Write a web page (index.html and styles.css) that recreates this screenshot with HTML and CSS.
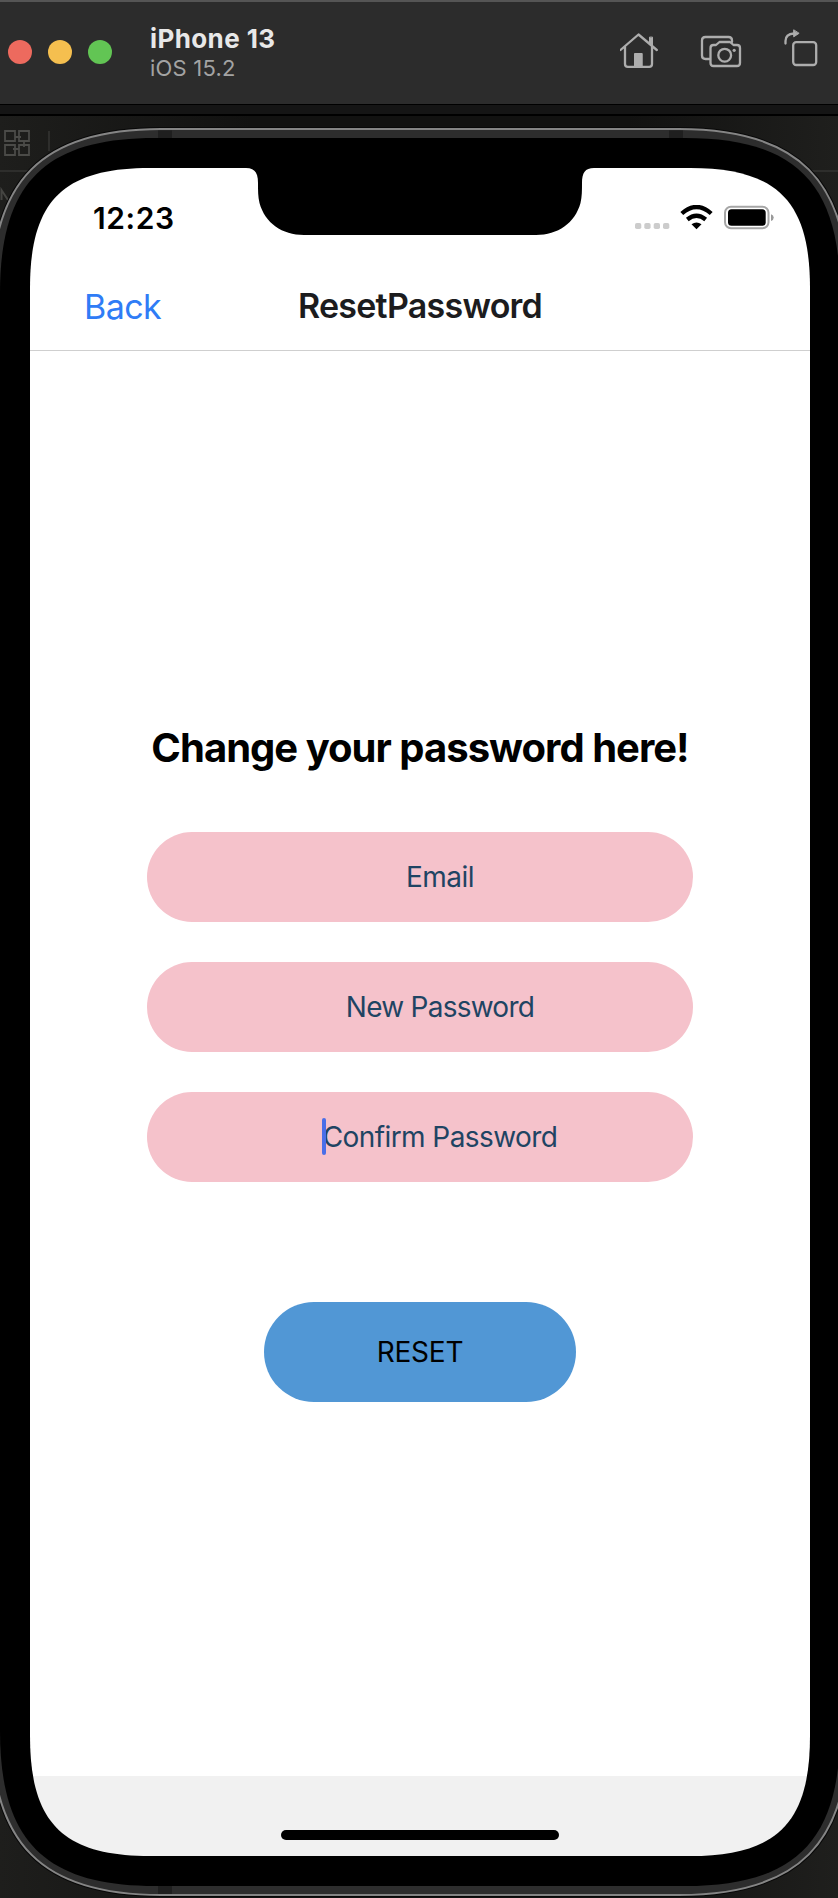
FILE: index.html
```html
<!DOCTYPE html>
<html lang="en">
<head>
<meta charset="utf-8">
<title>iPhone 13</title>
<link rel="stylesheet" href="styles.css">
</head>
<body>
<header class="titlebar">
  <div class="lights"><i class="light red"></i><i class="light yellow"></i><i class="light green"></i></div>
  <div class="device-name"><strong class="model">iPhone 13</strong><span class="os">iOS 15.2</span></div>
  <svg class="tools" width="218" height="60" viewBox="0 0 218 60" fill="none" stroke="#adadad" stroke-width="2.3" stroke-linecap="round" stroke-linejoin="round">
    <path d="M.5 30 18.500 14.500 36.800 30M5 27V44Q5 46.800 7.800 46.800H29.200Q32 46.800 32 44V27"/>
    <path d="M29.500 17.500V24L32.500 27V17.500Z" fill="#adadad" stroke-width="1"/>
    <path d="M14.500 46.500V33.500H22.200V46.500Z" fill="#adadad" stroke-width="1"/>
    <path d="M89.500 39H85.500Q82 39 82 35.500V20.500Q82 17 85.500 17H108.500Q112 17 112 20.500V22"/>
    <path d="M93.500 25H96L99.500 22H110L113.500 25H117Q120 25 120 28V43Q120 46 117 46H93.500Q90.500 46 90.500 43V28Q90.500 25 93.500 25Z"/>
    <circle cx="104.700" cy="35.200" r="6.400"/>
    <circle cx="114.200" cy="30.300" r="1.600" fill="#adadad" stroke="none"/>
    <rect x="173.200" y="22.200" width="23" height="22.800" rx="3"/>
    <path d="M165.500 23.500V21Q165.500 14 174 13.500"/>
    <path d="M173.700 10.200V16.800L178.800 13.500Z" fill="#adadad" stroke-width="1"/>
  </svg>
</header>
<main class="stage">
  <section class="screen">
    <div class="status">
      <span class="time">12:23</span>
      <svg class="indicators" width="140" height="26" viewBox="0 0 140 26">
        <g fill="#ccc"><rect x="0" y="18" width="6.300" height="6" rx="1.800"/><rect x="9.300" y="18" width="6.300" height="6" rx="1.800"/><rect x="18.700" y="18" width="6.300" height="6" rx="1.800"/><rect x="28" y="18" width="6.300" height="6" rx="1.800"/></g>
        <g fill="none" stroke="#000" stroke-width="4.300"><path d="M46.800 8.500Q61.500-4.500 76.200 8.500"/><path d="M52.300 14.500Q61.500 7 70.700 14.500"/></g>
        <path d="M56.500 19.300Q61.500 15.500 66.500 19.300L61.500 24.300Z"/>
        <rect x="90" y="1.700" width="43.500" height="21.600" rx="6" fill="none" stroke="#a6a6a6" stroke-width="2"/>
        <rect x="93" y="4.300" width="37.700" height="16.500" rx="3.500"/>
        <path d="M136 9.200Q138.700 10 138.700 12.600 138.700 15.300 136 16Z" fill="#999"/>
      </svg>
    </div>
    <nav class="nav"><a class="back">Back</a><h1 class="nav-title">ResetPassword</h1></nav>
    <div class="content">
      <h2 class="heading">Change your password here!</h2>
      <form class="fields">
        <div class="field"><span class="email">Email</span></div>
        <div class="field"><span class="new">New Password</span></div>
        <div class="field"><span class="confirm"><i class="caret"></i>Confirm Password</span></div>
      </form>
      <div class="reset"><span>RESET</span></div>
    </div>
    <footer class="bottom"><div class="home-indicator"></div></footer>
  </section>
</main>
<svg class="bezel" width="838" height="1782" viewBox="0 116 838 1782">
  <defs>
    <linearGradient id="backdrop" x1="0" y1="0" x2="1" y2="0"><stop offset="0" stop-color="#1e1e1c"/><stop offset=".3" stop-color="#121211"/><stop offset=".75" stop-color="#121211"/><stop offset="1" stop-color="#1f1f1d"/></linearGradient>
    <mask id="cutout"><rect y="116" width="838" height="1782" fill="#fff"/>
      <path fill="#000" d="M150 168H690c87 0 120 33 120 120V1736c0 87-33 120-120 120H150c-87 0-120-33-120-120V288c0-87 33-120 120-120Z"/>
      <path fill="#fff" d="M246 167V168C255 168 258 173 258 183C258 190 258 197 259.500 203C265 223 282 235 304 235H536C558 235 575 223 580.500 203C582 197 582 190 582 183C582 173 585 168 594 168V167Z"/>
    </mask>
    <path id="body" d="M161 129H679c119 0 170 51 170 170V1725c0 119-51 170-170 170H161c-119 0-170-51-170-170V299c0-119 51-170 170-170Z"/>
  </defs>
  <g mask="url(#cutout)">
    <rect y="116" width="838" height="1782" fill="url(#backdrop)"/>
    <g fill="none" stroke="#4b4b48" stroke-width="1.800"><path d="M5 131H15V141H5ZM19 131H29V141H19ZM5 145H15V155H5ZM19 145H29V155H19ZM15 137H21M24 141V147M13 149H19"/></g>
    <path d="M49 131V151M0 171H70M780 171H838" stroke="#2e2e2c" stroke-width="2"/>
    <path d="M1.500 200V190L8 200" fill="none" stroke="#454542" stroke-width="2"/>
    <use href="#body" stroke="#080808" stroke-width="4"/>
    <use href="#body" fill="#2d2d2d" stroke="#858585" stroke-width="2"/>
    <path fill="#1f1f1f" d="M158 130.500H172V140H158ZM669 130.500H683V140H669ZM158 1884H172V1894H158Z"/>
    <path d="M155 138H685c110 0 155 45 155 155V1731c0 110-45 155-155 155H155c-110 0-155-45-155-155V293c0-110 45-155 155-155Z"/>
  </g>
</svg>
</body>
</html>
```
FILE: styles.css
```css
* { box-sizing: border-box; }
body { margin: 0; position: relative; height: 1898px; overflow: hidden; background: #000; font-family: Inter, "Liberation Sans", sans-serif; }
.titlebar { height: 116px; display: flex; align-items: flex-start; border-top: 2px solid #555; background: linear-gradient(#2c2c2c 102px, #000 102px 103px, #151515 103px 112px, #000 112px); }
.lights { display: flex; gap: 16px; padding: 38px 0 0 8px; }
.light { width: 24px; height: 24px; border-radius: 50%; }
.red { background: #ed6a5e; }
.yellow { background: #f5bf4f; }
.green { background: #62c554; }
.device-name { display: flex; flex-direction: column; width: 200px; padding: 21px 0 0; margin-left: 38px; white-space: nowrap; }
.model { font-size: 26px; line-height: 31px; font-weight: 700; color: #e8e8e8; letter-spacing: .4px; }
.os { font-size: 22px; line-height: 28px; color: #a3a3a3; letter-spacing: .2px; }
.tools { margin: 18px 0 0 270px; flex: none; }
.stage { padding: 52px 28px 42px 30px; height: 1782px; }
.screen { width: 780px; height: 1688px; background: #fff; display: flex; flex-direction: column; }
.status { height: 90px; display: flex; justify-content: space-between; padding: 32px 35px 0 63px; }
.time { font-size: 30px; line-height: 36px; font-weight: 600; color: #000; letter-spacing: .6px; }
.indicators { margin-top: 5px; }
.nav { height: 93px; display: grid; grid-template-columns: 1fr auto 1fr; align-items: center; border-bottom: 1px solid #cfcfcf; padding: 3px 54px 0; }
.back { font-size: 34px; color: #2f7cf6; letter-spacing: -.6px; padding-top: 1px; }
.nav-title { margin: 0; font-size: 34px; font-weight: 600; color: #1c1c1e; letter-spacing: -.75px; }
.content { flex: 1; display: flex; flex-direction: column; align-items: center; padding-top: 373px; }
.heading { margin: 0 0 60px; font-size: 40px; line-height: 48px; font-weight: 700; letter-spacing: -.98px; color: #000; white-space: nowrap; }
.fields { display: flex; flex-direction: column; gap: 40px; }
.field { width: 546px; height: 90px; border-radius: 45px; background: #f5c2cb; padding-left: 40px; display: flex; align-items: center; justify-content: center; font-size: 28px; color: #1f4463; }
.email { letter-spacing: -.5px; }
.new { letter-spacing: -.75px; }
.confirm { position: relative; letter-spacing: -.58px; }
.caret { position: absolute; left: -1px; top: -2px; width: 4px; height: 37px; border-radius: 2px; background: #4a6ee8; }
.reset { width: 312px; height: 100px; margin-top: 120px; border-radius: 50px; background: #5197d5; display: flex; align-items: center; justify-content: center; font-size: 28px; letter-spacing: -.25px; color: #000; }
.bottom { height: 80px; background: #f1f1f1; padding-top: 54px; }
.home-indicator { width: 278px; height: 10px; border-radius: 5px; background: #000; margin: 0 auto; }
.bezel { position: absolute; left: 0; top: 116px; pointer-events: none; }
```
